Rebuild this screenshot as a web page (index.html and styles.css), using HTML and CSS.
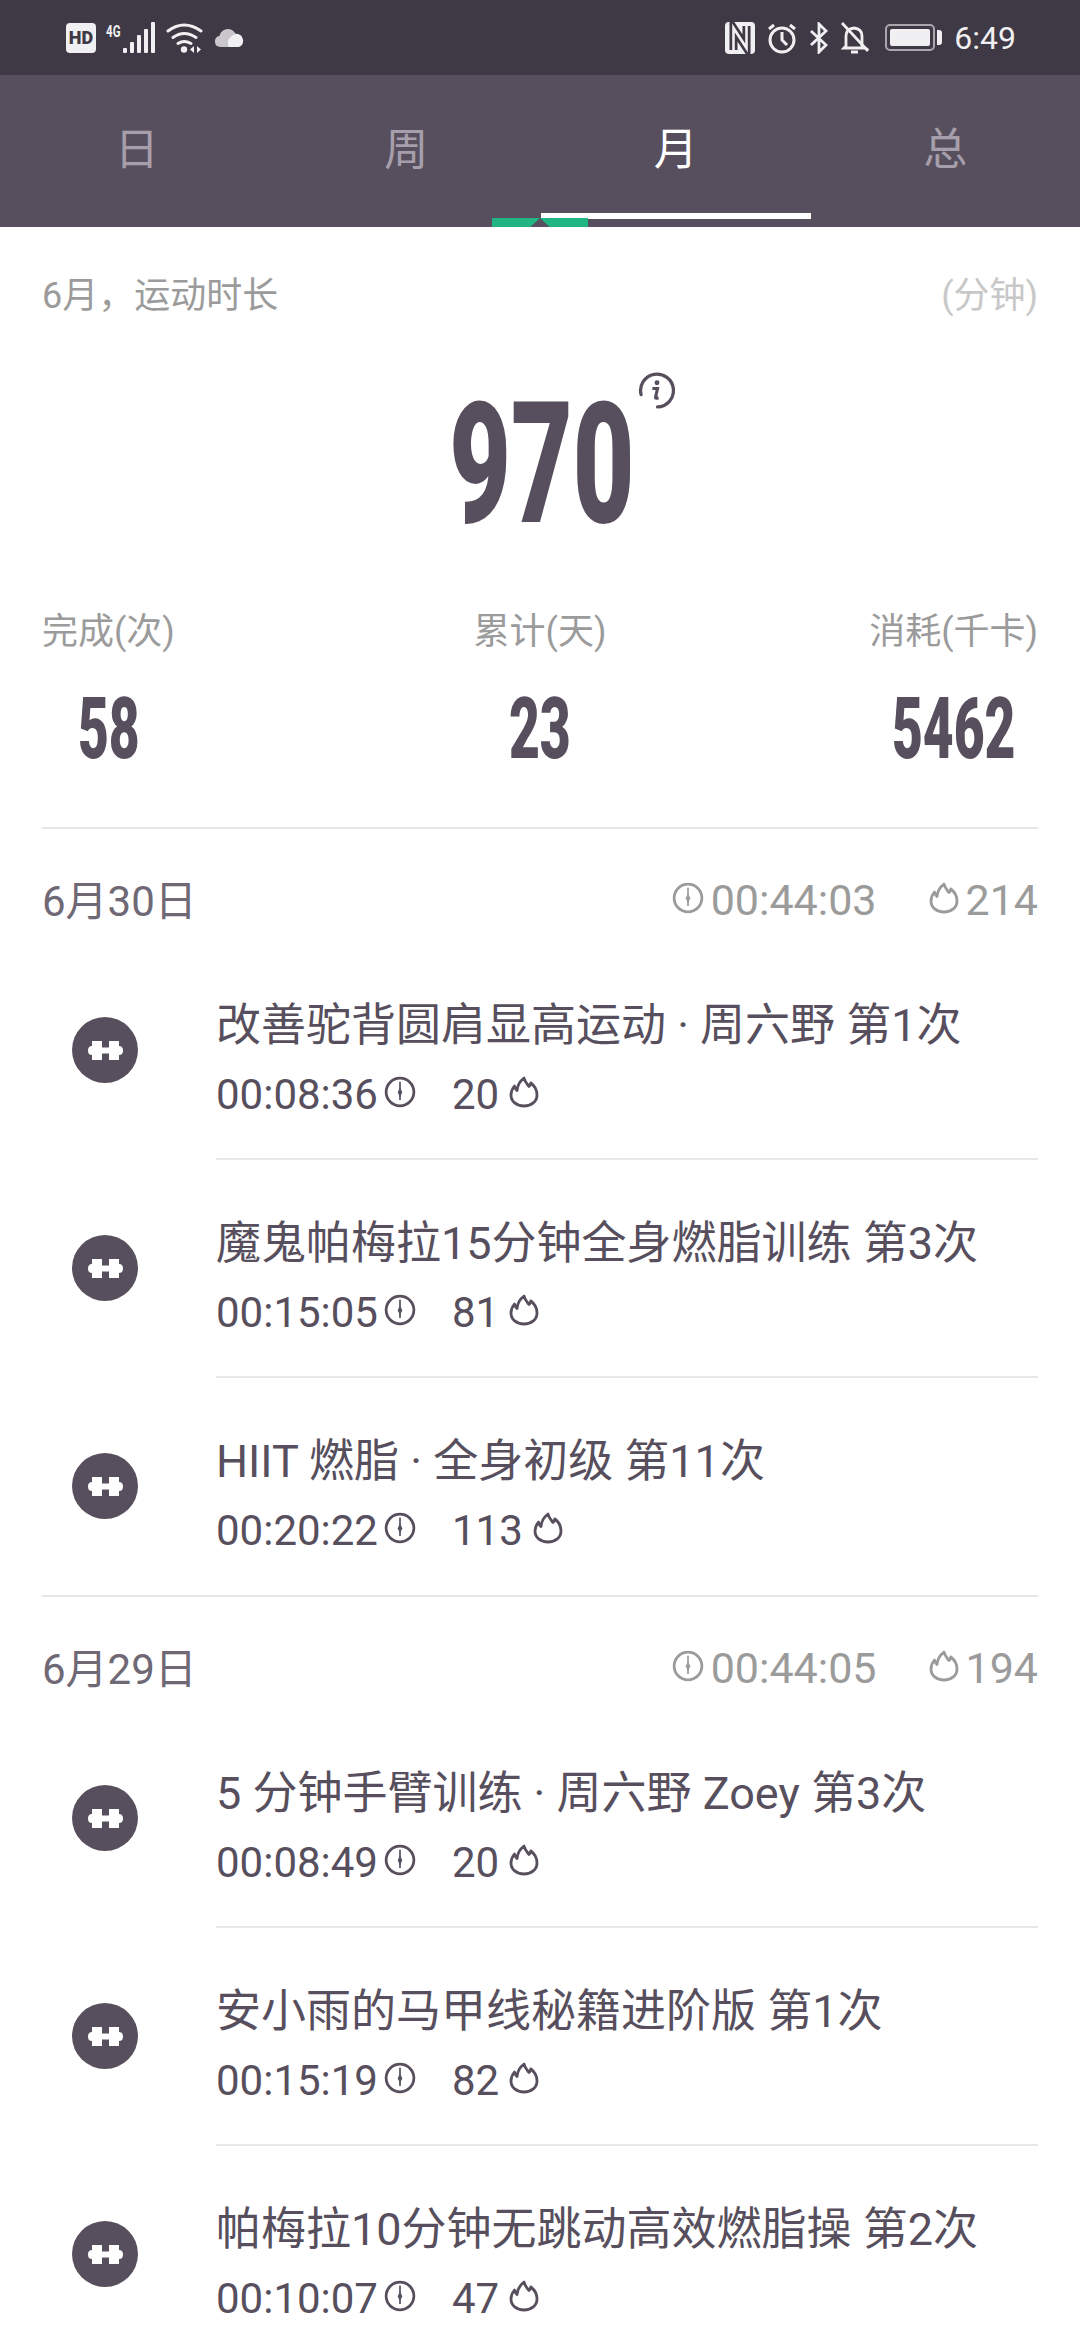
FILE: index.html
```html
<!DOCTYPE html>
<html lang="zh-CN">
<head>
    <meta charset="UTF-8">
    <meta name="viewport" content="width=device-width, initial-scale=1.0">
    <title>运动记录</title>
    <link rel="stylesheet" href="styles.css">
</head>
<body>
    <svg class="sprites" width="0" height="0">
        <symbol id="clock" viewBox="0 0 30 30">
            <circle cx="15" cy="15" r="13" fill="none" stroke="currentColor" stroke-width="2.600"/>
            <path d="M15 5.500v17" stroke="currentColor" stroke-width="1.600" fill="none"/>
            <path d="M15 10.500l2.200 5-2.200 4-2.200-4z" fill="currentColor"/>
        </symbol>
        <symbol id="flame" viewBox="0 0 30 32">
            <path d="M15 2c1 4 3 6 5 8.500 1-.8 1.600-2 1.800-3.500C26 10 28 14.500 28 19c0 6.500-5.500 11-13 11S2 25.500 2 19c0-3.500 1.500-6.500 3.500-9 .3 2 1 3.500 2.500 4.500C8.500 9.500 11 5 15 2z" fill="none" stroke="currentColor" stroke-width="2.800" stroke-linejoin="round"/>
        </symbol>
        <symbol id="dumbbell" viewBox="0 0 35 21">
            <path d="M0 10.500q0-4.500 4-4.500V1h10v6.500h7V1h10v5q4 0 4 4.500t-4 4.500v5H21v-6.500h-7V20H4v-5q-4 0-4-4.500z" fill="#fff"/>
        </symbol>
    </svg>

    <header class="status-bar">
        <div class="status-group">
            <div class="hd-badge">HD</div>
            <div class="signal">
                <span class="net-label">4G</span>
                <svg class="ic-signal" viewBox="0 0 33 32">
                    <rect x="0" y="26" width="4" height="5" rx="1" fill="#f0eff1"/>
                    <rect x="7" y="20" width="4" height="11" rx="1" fill="#f0eff1"/>
                    <rect x="14" y="13" width="4" height="18" rx="1" fill="#f0eff1"/>
                    <rect x="21" y="7" width="4" height="24" rx="1" fill="#f0eff1"/>
                    <rect x="28" y="0" width="4" height="31" rx="1" fill="#f0eff1"/>
                </svg>
            </div>
            <svg class="ic-wifi" viewBox="0 0 38 32">
                <path d="M2 9q16-12 33 0M7 15.500q11-8 23 0M12 21.500q6-4 13 0" fill="none" stroke="#f0eff1" stroke-width="3" stroke-linecap="round"/>
                <circle cx="18" cy="27.500" r="3.200" fill="#f0eff1"/>
                <path d="M28 24v7l-4-3.500zM31 24v7l4-3.500z" fill="#f0eff1"/>
            </svg>
            <svg class="ic-cloud" viewBox="0 0 32 22">
                <path d="M7 21q-6 0-6-6 0-5 5-6 2-7 9-7 5 0 8 5 7 0 8 7 0 7-6 7z" fill="#c9c7cb"/>
                <path d="M16 21q-3-5 1-10 3-3 6-4 7 0 8 7 0 7-6 7z" fill="#f0eff1"/>
            </svg>
        </div>
        <div class="status-group status-right">
            <svg class="ic-nfc" viewBox="0 0 30 32">
                <rect width="30" height="32" rx="4" fill="#f0eff1"/>
                <path d="M8.500 28V6l13 20V4" fill="none" stroke="#3e3944" stroke-width="8"/>
                <path d="M8.500 28V6l13 20V4" fill="none" stroke="#f0eff1" stroke-width="2.600"/>
            </svg>
            <svg class="ic-alarm" viewBox="0 0 30 32">
                <circle cx="15" cy="18" r="12" fill="none" stroke="#f0eff1" stroke-width="3"/>
                <path d="M15 10v8l5 5M2 7l5-4M28 7l-5-4" fill="none" stroke="#f0eff1" stroke-width="3"/>
            </svg>
            <svg class="ic-bt" viewBox="0 0 20 32">
                <path d="M2 9l15 14-7 7V2l7 7L2 23" fill="none" stroke="#f0eff1" stroke-width="2.800"/>
            </svg>
            <svg class="ic-bell" viewBox="0 0 28 32">
                <path d="M5 24V14q0-7 8-8 8 1 8 8v10l3 2H3z" fill="none" stroke="#f0eff1" stroke-width="2.800"/>
                <path d="M10 30h7M1 1l26 28" fill="none" stroke="#f0eff1" stroke-width="2.800"/>
            </svg>
            <div class="battery"><div class="battery-fill"></div></div>
            <span class="clock-text">6:49</span>
        </div>
    </header>

    <nav class="tabs">
        <div class="tab">日</div>
        <div class="tab">周</div>
        <div class="tab tab-active">月</div>
        <div class="tab">总</div>
        <div class="peek"></div>
    </nav>

    <section class="summary">
        <div class="summary-head">
            <span>6月，运动时长</span>
            <span class="unit">(分钟)</span>
        </div>
        <div class="total">
            <span class="big-num">970</span>
            <svg class="ic-info" viewBox="0 0 36 36">
                <path d="M3 22A16 16 0 1 1 19 34" fill="none" stroke="#574f5d" stroke-width="3.200" stroke-linecap="round"/>
                <circle cx="18.500" cy="10.500" r="2.400" fill="#574f5d"/>
                <path d="M14 16h5l-2 9q0 1 3 0" fill="none" stroke="#574f5d" stroke-width="3"/>
            </svg>
        </div>
        <div class="stats">
            <div class="stat"><div class="stat-label">完成(次)</div><div class="stat-num"><span>58</span></div></div>
            <div class="stat"><div class="stat-label">累计(天)</div><div class="stat-num"><span>23</span></div></div>
            <div class="stat"><div class="stat-label">消耗(千卡)</div><div class="stat-num"><span>5462</span></div></div>
        </div>
    </section>

    <div id="days"></div>

    <script src="app.js"></script>
</body>
</html>
```

FILE: styles.css
```css
* {
    box-sizing: border-box;
}

html, body {
    height: 2340px;
    overflow: hidden;
}

body {
    margin: 0;
    background-color: #fff;
    color: #574f5d;
    font-family: Roboto, 'Noto Sans CJK SC', sans-serif;
}

.sprites {
    position: absolute;
}

/* top bar */
.status-bar {
    height: 75px;
    padding: 0 64px 0 66px;
    background-color: #3e3944;
    display: flex;
    justify-content: space-between;
    align-items: center;
}

.status-group {
    display: flex;
    align-items: center;
    gap: 10px;
}

.status-right {
    gap: 12px;
}

.hd-badge {
    width: 30px;
    height: 30px;
    border-radius: 4px;
    background-color: #f0eff1;
    color: #3e3944;
    font-size: 18px;
    font-weight: 900;
    line-height: 30px;
    text-align: center;
}

.signal {
    width: 50px;
    display: flex;
    justify-content: space-between;
}

.net-label {
    width: 17px;
    height: 18px;
    font-size: 17px;
    font-weight: 700;
    line-height: 18px;
    color: #f0eff1;
    white-space: nowrap;
    transform: scaleX(0.68);
    transform-origin: left;
}

.ic-signal {
    width: 33px;
    height: 32px;
}

.ic-wifi {
    width: 38px;
    height: 32px;
}

.ic-cloud {
    width: 30px;
    height: 21px;
}

.ic-nfc {
    width: 30px;
    height: 32px;
}

.ic-alarm {
    width: 30px;
    height: 32px;
}

.ic-bt {
    width: 20px;
    height: 32px;
}

.ic-bell {
    width: 28px;
    height: 32px;
}

.battery {
    width: 50px;
    height: 27px;
    margin-left: 4px;
    padding: 3px;
    border: 2px solid #a9a6ad;
    border-radius: 5px;
    position: relative;
}

.battery::after {
    content: '';
    position: absolute;
    right: -9px;
    top: 4px;
    width: 5px;
    height: 15px;
    border-radius: 0 3px 3px 0;
    background-color: #f0eff1;
}

.battery-fill {
    height: 100%;
    border-radius: 2px;
    background-color: #f0eff1;
}

.clock-text {
    margin-left: 7px;
    font-size: 32px;
    color: #f0eff1;
}

.tabs {
    height: 152px;
    padding-left: 2px;
    background-color: #574f5d;
    display: grid;
    grid-template-columns: repeat(4, 1fr);
    position: relative;
}

.tab {
    padding-top: 50px;
    text-align: center;
    font-size: 44px;
    line-height: 50px;
    color: #a69fab;
}

.tab-active {
    color: #fff;
    border-bottom: 6px solid #fff;
    height: 144px;
}

.peek {
    position: absolute;
    left: 492px;
    bottom: 0;
    width: 96px;
    height: 9px;
    background-color: #20b583;
    clip-path: polygon(0 0, 100% 0, 100% 100%, 60% 100%, 50% 0, 40% 100%, 0 100%);
}

/* monthly summary */
.summary {
    padding: 0 42px;
}

.summary-head {
    padding-top: 46px;
    display: flex;
    justify-content: space-between;
    font-size: 36px;
    line-height: 46px;
    color: #9b9b9b;
}

.unit {
    color: #c8c8c8;
}

.total {
    height: 280px;
    padding-left: 3px;
    display: flex;
    justify-content: center;
    position: relative;
}

.big-num {
    display: block;
    margin-top: 50px;
    font-size: 169px;
    line-height: 190px;
    font-weight: 900;
    transform: scaleX(0.63);
}

.ic-info {
    position: absolute;
    left: 596px;
    top: 53px;
    width: 37px;
    height: 37px;
}

.stats {
    display: grid;
    grid-template-columns: 1fr auto 1fr;
    padding-top: 11px;
    height: 230px;
    border-bottom: 2px solid #e8e8e8;
}

.stat:first-child {
    justify-self: start;
}

.stat:last-child {
    justify-self: end;
}

.stat-label {
    font-size: 36px;
    line-height: 44px;
    color: #9b9b9b;
}

.stat-num {
    margin-top: 30px;
    text-align: center;
    font-size: 86px;
    line-height: 90px;
    font-weight: 900;
}

.stat-num span {
    display: inline-block;
    margin: 0 -80px;
    transform: scaleX(0.62);
}

/* workout list */
.day {
    padding: 0 42px;
}

.day-head {
    height: 112px;
    padding-top: 24px;
    display: flex;
    justify-content: space-between;
    align-items: center;
    color: #9b9b9b;
}

.day-date {
    font-size: 42px;
    color: #6f6875;
}

.day-totals {
    margin-top: 5px;
    display: flex;
    align-items: center;
    font-size: 43px;
}

.day-time {
    margin-right: 52px;
}

.day-totals svg {
    margin-right: 7px;
    margin-bottom: 4px;
}

.icon-clock {
    width: 32px;
    height: 32px;
}

.icon-flame {
    width: 30px;
    height: 32px;
}

.rows {
    border-bottom: 2px solid #e8e8e8;
}

.row {
    height: 218px;
    display: flex;
    align-items: center;
}

.row-badge {
    width: 66px;
    height: 66px;
    margin-left: 30px;
    margin-right: 78px;
    flex-shrink: 0;
    border-radius: 50%;
    background-color: #574f5d;
    display: flex;
    align-items: center;
    justify-content: center;
}

.row-badge svg {
    width: 35px;
    height: 21px;
}

.row-body {
    flex: 1;
    align-self: stretch;
    padding-top: 60px;
    margin-bottom: -1px;
    border-bottom: 2px solid #e8e8e8;
}

.row:last-child .row-body {
    border-bottom: none;
}

.row-title {
    font-size: 45px;
    line-height: 50px;
}

.row-meta {
    margin-top: 18px;
    display: flex;
    align-items: center;
    font-size: 42px;
    line-height: 52px;
}

.row-time {
    width: 162px;
}

.row-meta .icon-clock {
    margin-left: 6px;
    margin-bottom: 6px;
}

.row-kcal {
    margin-left: 36px;
}

.row-meta .icon-flame {
    margin-left: 10px;
    margin-bottom: 6px;
}
```

FILE: app.js
```js
const days = [
    {
        date: '6月30日', time: '00:44:03', kcal: 214,
        rows: [
            ['改善驼背圆肩显高运动 · 周六野 第1次', '00:08:36', 20],
            ['魔鬼帕梅拉15分钟全身燃脂训练 第3次', '00:15:05', 81],
            ['HIIT 燃脂 · 全身初级 第11次', '00:20:22', 113]
        ]
    },
    {
        date: '6月29日', time: '00:44:05', kcal: 194,
        rows: [
            ['5 分钟手臂训练 · 周六野 Zoey 第3次', '00:08:49', 20],
            ['安小雨的马甲线秘籍进阶版 第1次', '00:15:19', 82],
            ['帕梅拉10分钟无跳动高效燃脂操 第2次', '00:10:07', 47]
        ]
    }
];

const clockIcon = '<svg class="icon-clock"><use href="#clock"/></svg>';
const flameIcon = '<svg class="icon-flame"><use href="#flame"/></svg>';

function renderRow([title, time, kcal]) {
    return `
        <div class="row">
            <div class="row-badge"><svg><use href="#dumbbell"/></svg></div>
            <div class="row-body">
                <div class="row-title">${title}</div>
                <div class="row-meta">
                    <span class="row-time">${time}</span>${clockIcon}
                    <span class="row-kcal">${kcal}</span>${flameIcon}
                </div>
            </div>
        </div>`;
}

document.getElementById('days').innerHTML = days.map(day => `
    <section class="day">
        <div class="day-head">
            <span class="day-date">${day.date}</span>
            <div class="day-totals">
                ${clockIcon}<span class="day-time">${day.time}</span>
                ${flameIcon}<span>${day.kcal}</span>
            </div>
        </div>
        <div class="rows">${day.rows.map(renderRow).join('')}</div>
    </section>`).join('');
```
